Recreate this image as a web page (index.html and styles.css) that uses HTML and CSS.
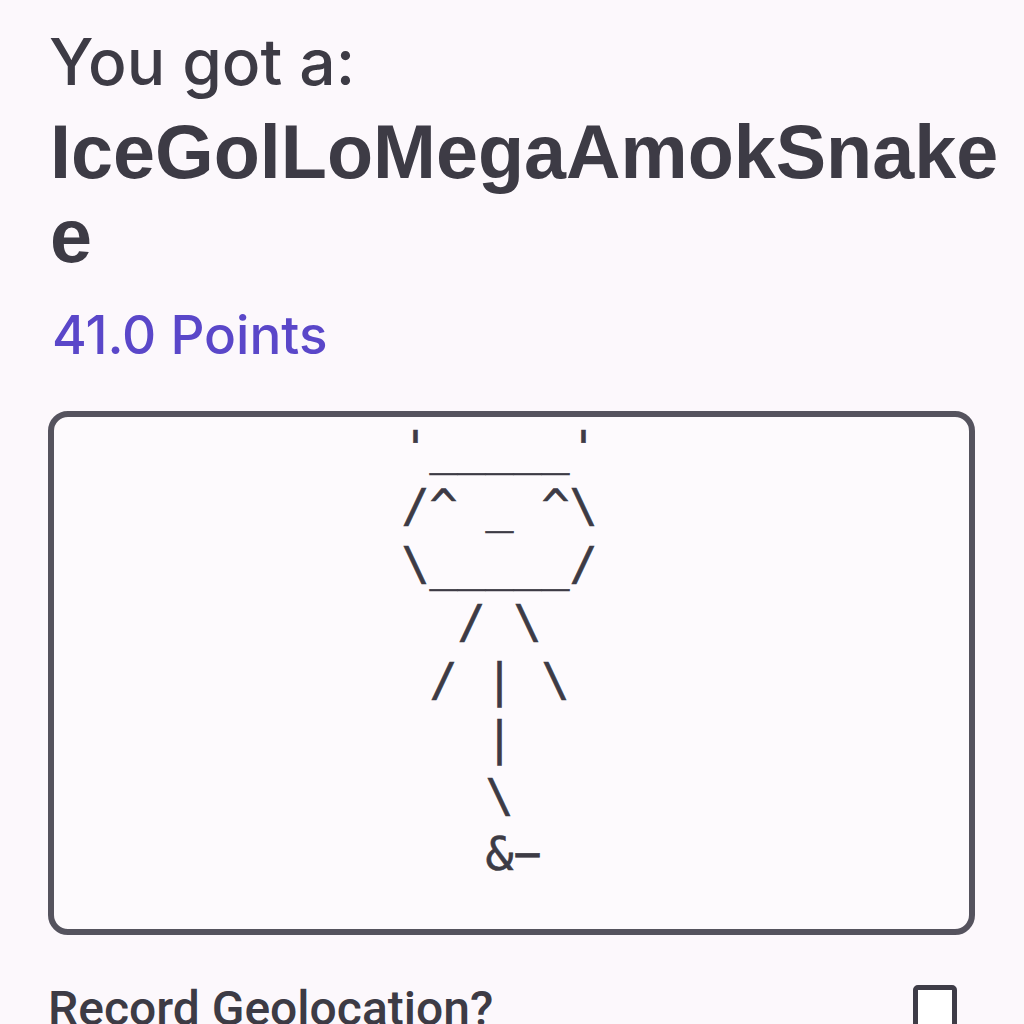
FILE: index.html
```html
<!DOCTYPE html>
<html lang="en">
<head>
<meta charset="utf-8">
<title>Result</title>
<link rel="stylesheet" href="styles.css">
</head>
<body>
<main class="page">
  <p class="intro">You got a:</p>
  <h1 class="result-name">IceGolLoMegaAmokSnakee</h1>
  <p class="points">41.0 Points</p>
  <section class="art-card">
<pre class="art">'_____'
/^ _ ^\
\_____/
  / \
 / | \
   |
   \
   &amp;−</pre>
  </section>
  <label class="geo-row">
    <span class="geo-label">Record Geolocation?</span>
    <span class="checkbox"></span>
  </label>
</main>
</body>
</html>
```

FILE: styles.css
```css
html, body {
  margin: 0;
  padding: 0;
  background: #fcf8fc;
}

body {
  color: #3d3b45;
  font-family: "Inter", "Liberation Sans", sans-serif;
  overflow: hidden;
}

.page {
  padding: 24px 49px 0 48px;
}

.intro {
  margin: 0 0 0 1px;
  font-size: 64px;
  line-height: 76px;
  font-weight: 450;
}

.result-name {
  margin: 10px -30px 0 2px;
  font-family: "Liberation Sans", Arial, sans-serif;
  font-weight: 700;
  font-size: 75.5px;
  line-height: 84px;
  word-break: break-all;
}

.points {
  margin: 26px 0 0 4px;
  color: #5a47c9;
  font-size: 53px;
  font-weight: 450;
  line-height: 62px;
}

.art-card {
  margin-top: 45px;
  border: 6px solid #55535e;
  border-radius: 20px;
  background: #fdfafd;
  padding: 2px 24px 46px 0;
  display: flex;
  justify-content: center;
}

.art {
  margin: 0;
  font-family: "DejaVu Sans Mono", monospace;
  font-size: 46.5px;
  line-height: 58px;
  color: #3d3b45;
  -webkit-text-stroke: 0.6px #3d3b45;
}

.geo-row {
  margin-top: 48px;
  padding-right: 18px;
  display: flex;
  justify-content: space-between;
  align-items: flex-start;
}

.geo-label {
  font-family: "Roboto", "Liberation Sans", sans-serif;
  font-weight: 500;
  font-size: 48px;
  line-height: 52px;
}

.checkbox {
  margin-top: 2px;
  width: 44px;
  height: 44px;
  box-sizing: border-box;
  border: 5px solid #3e3c47;
  border-radius: 5px;
  background: #fff;
}
```
